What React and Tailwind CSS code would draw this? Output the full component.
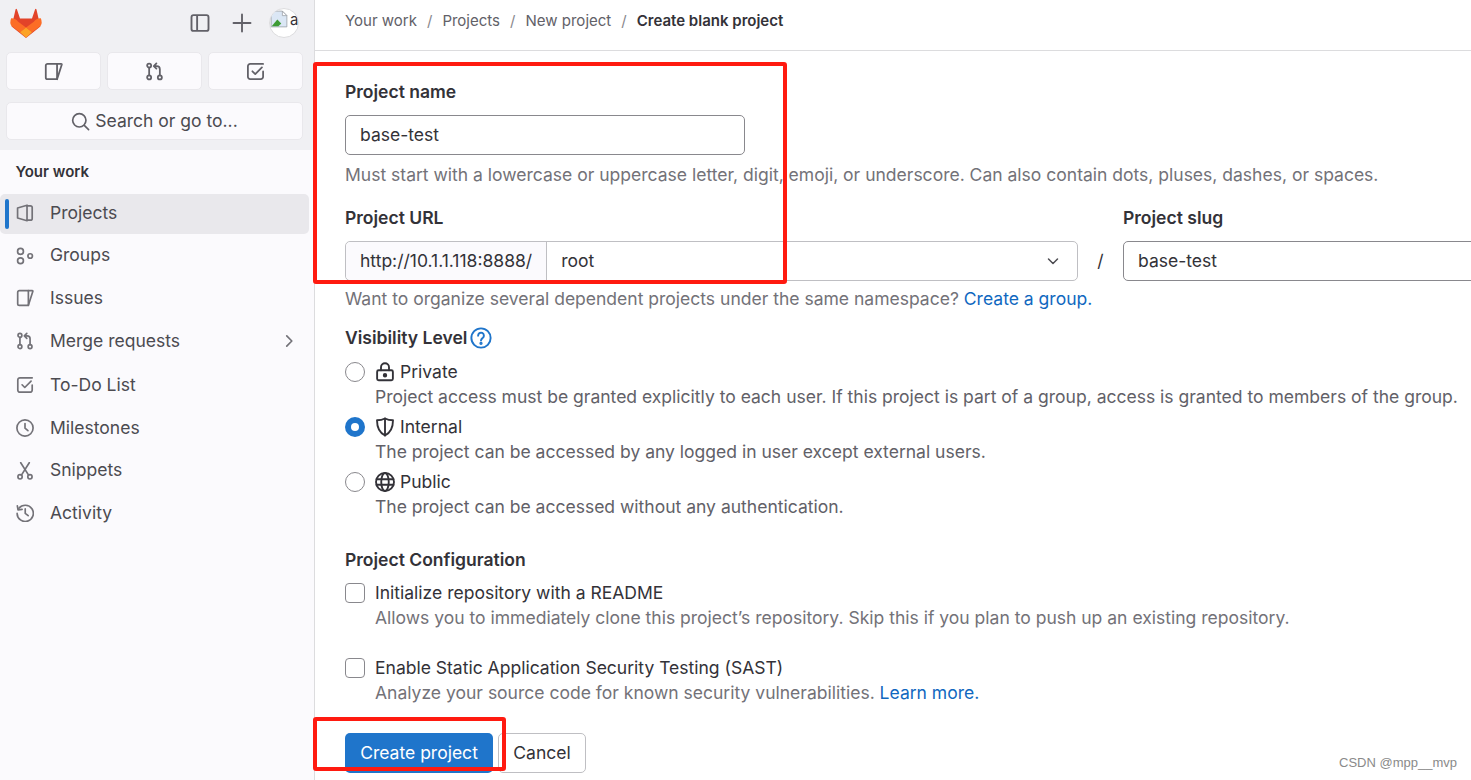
const Icon = ({ children, className = 'w-5 h-5' }) => (
  <svg viewBox="0 0 16 16" fill="none" stroke="currentColor" strokeWidth="1.5" strokeLinecap="round" strokeLinejoin="round" className={`shrink-0 ${className}`}>
    {children}
  </svg>
);

const IssuesIcon = (props) => (
  <Icon {...props}>
    <path d="M11 1.500H3a1.500 1.500 0 0 0-1.500 1.500v10A1.500 1.500 0 0 0 3 14.500h8z" />
    <path d="M11 1.500h3.500a.5.500 0 0 1 .5.600L11 14.500" />
  </Icon>
);

const MergeIcon = (props) => (
  <Icon {...props}>
    <circle cx="3.500" cy="3" r="1.700" />
    <circle cx="3.500" cy="13" r="1.700" />
    <circle cx="12.500" cy="13" r="1.700" />
    <path d="M3.500 4.700v6.600M12.500 11.300V6a2.600 2.600 0 0 0-2.600-2.600H7.600M9.600 1.200L7.400 3.400l2.200 2.200" />
  </Icon>
);

const TodoIcon = (props) => (
  <Icon {...props}>
    <path d="M14.400 8v4.500a1.900 1.900 0 0 1-1.900 1.900h-9a1.900 1.900 0 0 1-1.900-1.900v-9a1.900 1.900 0 0 1 1.900-1.900h10.900" />
    <path d="M5.400 7.800l2.400 2.400 5.600-5.600" />
  </Icon>
);

const ProjectIcon = (props) => (
  <Icon {...props}>
    <path d="M1.400 3.500L9.800 1.100v13.800l-8.400-2.400z" />
    <path d="M9.800 1.600h3a1.600 1.600 0 0 1 1.600 1.600v9.600a1.600 1.600 0 0 1-1.600 1.600h-3" />
  </Icon>
);

const GroupIcon = (props) => (
  <Icon {...props}>
    <circle cx="4" cy="3.900" r="2.600" />
    <circle cx="4" cy="12.200" r="2.600" />
    <circle cx="12.600" cy="8" r="2" />
  </Icon>
);

const ClockIcon = (props) => (
  <Icon {...props}>
    <circle cx="8" cy="8" r="7.200" />
    <path d="M8 4v4.200l2.600 2.200" />
  </Icon>
);

const SnippetIcon = (props) => (
  <Icon {...props}>
    <circle cx="3.600" cy="13.200" r="1.900" />
    <circle cx="12.400" cy="13.200" r="1.900" />
    <path d="M4.800 11.700L11.800 .6M11.200 11.700L4.200 .6" />
  </Icon>
);

const HistoryIcon = (props) => (
  <Icon {...props}>
    <path d="M2.600 3.800A7.200 7.200 0 1 1 1 8.400" />
    <path d="M1.200 1.600l.6 3.600 3.600-.4" />
    <path d="M8.200 4.400v4l2.600 2" />
  </Icon>
);

const LockIcon = () => (
  <Icon className="w-[20px] h-[20px] text-[#333238]">
    <rect x="1.700" y="6.600" width="12.600" height="8" rx="1.200" />
    <path d="M4.800 6.600V4.200a3.200 3.200 0 0 1 6.400 0v2.400" />
    <circle cx="8" cy="10.600" r="1" fill="currentColor" />
  </Icon>
);

const ShieldIcon = () => (
  <Icon className="w-[20px] h-[20px] text-[#333238]">
    <path d="M8 1.200c2 1 4 1.400 6.400 1.400 0 5.800-1.600 9.800-6.400 12.200C3.200 12.400 1.600 8.400 1.600 2.600 4 2.600 6 2.200 8 1.200z" />
    <path d="M8 1.200v13.600" />
  </Icon>
);

const GlobeIcon = () => (
  <Icon className="w-[20px] h-[20px] text-[#333238]">
    <circle cx="8" cy="8" r="7.200" />
    <ellipse cx="8" cy="8" rx="3" ry="7.200" />
    <path d="M1.200 5.800h13.600M1.200 10.200h13.600" />
  </Icon>
);

const Logo = () => (
  <svg viewBox="0 0 32 30" className="w-[32px] h-[30px]">
    <path fill="#e24329" d="M16 30L1.600 18.600 5.600 1.200a.7.700 0 0 1 1.300 0L10 10.400h12l3.100-9.200a.7.700 0 0 1 1.300 0l4 17.400z" />
    <path fill="#fc6d26" d="M1.200 10.200a9 9 0 0 0-.9 4.600c.1 1.400.7 2.800 1.900 3.700L10 24.200l6-4.600-7.800-5.900a8 8 0 0 0-7-3.500zM30.800 10.200a9 9 0 0 1 .9 4.600c-.1 1.400-.7 2.800-1.900 3.700L22 24.200l-6-4.600 7.800-5.900a8 8 0 0 1 7-3.500z" />
    <path fill="#fca326" d="M10 24.200l6-4.600 6 4.600-5.200 4.900a1.200 1.200 0 0 1-1.600 0z" />
  </svg>
);

const navItems = [
  { label: 'Projects', icon: ProjectIcon, active: true },
  { label: 'Groups', icon: GroupIcon },
  { label: 'Issues', icon: IssuesIcon },
  { label: 'Merge requests', icon: MergeIcon, chevron: true },
  { label: 'To-Do List', icon: TodoIcon, spaced: true },
  { label: 'Milestones', icon: ClockIcon },
  { label: 'Snippets', icon: SnippetIcon },
  { label: 'Activity', icon: HistoryIcon },
];

const Sidebar = () => (
  <aside className="w-[315px] shrink-0 h-full bg-[#fbfafd] border-r border-[#dcdcde] flex flex-col">
    <div className="bg-[#f0f0f3] h-[150px] pl-[6px] pr-[11px] shrink-0">
      <div className="h-[46px] flex items-center">
        <div className="ml-[4px]"><Logo /></div>
        <div className="ml-auto flex items-center text-[#626168]">
          <svg viewBox="0 0 16 16" fill="none" stroke="currentColor" strokeWidth="1.500" className="w-[20px] h-[20px]">
            <rect x="1.200" y="1.700" width="13.600" height="12.600" rx="1.600" />
            <path d="M5.700 1.700v12.600" />
          </svg>
          <svg viewBox="0 0 16 16" fill="none" stroke="currentColor" strokeWidth="1.500" strokeLinecap="round" className="w-[20px] h-[20px] ml-[22px]">
            <path d="M8 1.200v13.600M1.200 8h13.600" />
          </svg>
          <div className="w-[30px] h-[30px] ml-[17px] mr-[4px] rounded-full border border-[#dcdcde] overflow-hidden relative bg-white">
            <svg viewBox="0 0 16 16" className="w-[18px] h-[18px] absolute left-0 top-[1px]">
              <path fill="#dbe7f5" stroke="#9aa0a6" strokeWidth="0.700" d="M1 1h10l4 4v10H1z" />
              <path fill="#fff" stroke="#9aa0a6" strokeWidth="0.700" d="M11 1v4h4z" />
              <path fill="#3e9c35" d="M1.500 14.500l5-6 3.500 3.500-2.500 2.500z" />
            </svg>
            <span className="absolute left-[20px] top-[2px] text-[15px] leading-[18px] text-[#333238]">a</span>
          </div>
        </div>
      </div>
      <div className="flex gap-[6.500px] mt-[6px]">
        {[IssuesIcon, MergeIcon, TodoIcon].map((I, idx) => (
          <div key={idx} className="flex-1 h-[38px] bg-[#fbfafd] rounded-[5px] border border-[#e9e8ec] flex items-center justify-center text-[#626168]">
            <I className="w-[19px] h-[19px]" />
          </div>
        ))}
      </div>
      <div className="h-[38px] mt-[12px] bg-[#fbfafd] rounded-[5px] border border-[#e9e8ec] flex items-center justify-center gap-[5px] text-[#4c4b51] text-[17.530px]">
        <svg viewBox="0 0 16 16" fill="none" stroke="#626168" strokeWidth="1.400" strokeLinecap="round" className="w-[19px] h-[19px]">
          <circle cx="7" cy="7" r="5.600" />
          <path d="M11.200 11.200l3.600 3.600" />
        </svg>
        Search or go to...
      </div>
    </div>
    <div className="h-[24px] mt-[10px] pl-[15.500px] flex items-center text-[15px] font-semibold text-[#333238]">Your work</div>
    <nav className="mt-[10px] mr-[5px] flex flex-col gap-[2.600px]">
      {navItems.map(({ label, icon: I, active, chevron, spaced }) => (
        <div key={label} className={`relative h-[40px] pb-[2px] rounded-[5px] flex items-center pl-[16px] text-[17.530px] text-[#4c4b51] ${active ? 'bg-[#e9e8ec]' : ''} ${spaced ? 'mt-[2px]' : ''}`}>
          {active && <span className="absolute left-[5px] top-[5px] bottom-[5px] w-[4px] rounded-full bg-[#1f75cb]" />}
          <span className="text-[#737278]"><I className="w-[18px] h-[18px]" /></span>
          <span className="ml-[16px]">{label}</span>
          {chevron && (
            <svg viewBox="0 0 16 16" fill="none" stroke="#737278" strokeWidth="1.500" strokeLinecap="round" strokeLinejoin="round" className="w-[18px] h-[18px] ml-auto mr-[11px]">
              <path d="M6 3.500L10.500 8 6 12.500" />
            </svg>
          )}
        </div>
      ))}
    </nav>
  </aside>
);

const Label = ({ children, className = '' }) => (
  <div className={`h-[24px] flex items-center font-semibold text-[#333238] ${className}`}>{children}</div>
);

const Help = ({ children, className = '' }) => (
  <div className={`h-[24px] flex items-center text-[#737278] whitespace-pre ${className}`}>{children}</div>
);

const Radio = ({ checked }) =>
  checked ? (
    <span className="w-[20px] h-[20px] rounded-full bg-[#1f75cb] flex items-center justify-center shrink-0">
      <span className="w-[8px] h-[8px] rounded-full bg-white" />
    </span>
  ) : (
    <span className="w-[20px] h-[20px] rounded-full border border-[#89888d] bg-white shrink-0" />
  );

const visibility = [
  { label: 'Private', icon: LockIcon, help: 'Project access must be granted explicitly to each user. If this project is part of a group, access is granted to members of the group.', mt: 'mt-[10px]' },
  { label: 'Internal', icon: ShieldIcon, checked: true, help: 'The project can be accessed by any logged in user except external users.', mt: 'mt-[6px]' },
  { label: 'Public', icon: GlobeIcon, help: 'The project can be accessed without any authentication.', mt: 'mt-[6px]' },
];

const Form = () => (
  <div className="pl-[30px] w-[1300px]">
    <Label className="mt-[29px]">Project name</Label>
    <div className="mt-[11px] w-[400px] h-[40px] rounded-[5px] border border-[#89888d] flex items-center px-[14px] text-[#333238]">base-test</div>
    <Help className="mt-[8px]">Must start with a lowercase or uppercase letter, digit, emoji, or underscore. Can also contain dots, pluses, dashes, or spaces.</Help>
    <div className="flex items-start mt-[19px]">
      <div className="w-[733px] shrink-0">
        <Label>Project URL</Label>
        <div className="mt-[11px] h-[40px] rounded-[5px] border border-[#bfbfc3] flex items-center text-[#333238]">
          <div className="h-full flex items-center px-[14px] bg-[#fbfafd] border-r border-[#bfbfc3] rounded-l-[5px] whitespace-nowrap">http://10.1.1.118:8888/</div>
          <div className="pl-[14px]">root</div>
          <svg viewBox="0 0 16 16" fill="none" stroke="#4c4b51" strokeWidth="1.500" strokeLinecap="round" strokeLinejoin="round" className="w-[16px] h-[16px] ml-auto mr-[16px]">
            <path d="M3.500 6L8 10.500 12.500 6" />
          </svg>
        </div>
      </div>
      <div className="w-[45px] shrink-0 h-[40px] mt-[35px] flex items-center justify-center text-[#333238]">/</div>
      <div className="w-[400px] shrink-0">
        <Label>Project slug</Label>
        <div className="mt-[11px] h-[40px] rounded-[5px] border border-[#89888d] flex items-center px-[14px] text-[#333238]">base-test</div>
      </div>
    </div>
    <Help className="mt-[6px]">Want to organize several dependent projects under the same namespace? <span className="text-[#1068bf]">Create a group.</span></Help>
    <Label className="mt-[15px]">
      Visibility Level
      <svg viewBox="0 0 16 16" fill="none" stroke="#1f75cb" strokeWidth="1.400" strokeLinecap="round" className="w-[22px] h-[22px] ml-[3px]">
        <circle cx="8" cy="8" r="7" />
        <path d="M5.900 6.300a2.100 2.100 0 1 1 3.400 1.600c-.8.600-1.300 1-1.300 2" />
        <circle cx="8" cy="11.900" r=".5" fill="#1f75cb" />
      </svg>
    </Label>
    {visibility.map(({ label, icon: I, help, checked, mt }) => (
      <div key={label} className={mt}>
        <div className="h-[24px] flex items-center text-[#333238]">
          <Radio checked={checked} />
          <span className="ml-[10px] flex items-center gap-[5px]"><I />{label}</span>
        </div>
        <Help className="mt-[1px] ml-[30px] !text-[#626168]">{help}</Help>
      </div>
    ))}
    <Label className="mt-[29px]">Project Configuration</Label>
    <div className="mt-[9px] h-[24px] flex items-center text-[#333238]">
      <span className="w-[20px] h-[20px] rounded-[4px] border border-[#89888d] bg-white shrink-0" />
      <span className="ml-[10px]">Initialize repository with a README</span>
    </div>
    <Help className="mt-[1px] ml-[30px]">Allows you to immediately clone this project’s repository. Skip this if you plan to push up an existing repository.</Help>
    <div className="mt-[26px] h-[24px] flex items-center text-[#333238]">
      <span className="w-[20px] h-[20px] rounded-[4px] border border-[#89888d] bg-white shrink-0" />
      <span className="ml-[10px]">Enable Static Application Security Testing (SAST)</span>
    </div>
    <Help className="mt-[1px] ml-[30px]">Analyze your source code for known security vulnerabilities. <span className="text-[#1068bf]">Learn more.</span></Help>
    <div className="mt-[28px] flex gap-[5px]">
      <button className="h-[40px] w-[148px] rounded-[5px] bg-[#1f75cb] text-white">Create project</button>
      <button className="h-[40px] w-[88px] rounded-[5px] border border-[#bfbfc3] bg-white text-[#333238]">Cancel</button>
    </div>
  </div>
);

export default function App() {
  return (
    <div className="relative w-[1471px] h-[780px] overflow-hidden bg-white flex text-[17.530px] font-['Inter',sans-serif]">
      <Sidebar />
      <main className="flex-1 min-w-0">
        <div className="h-[51px] border-b border-[#dcdcde] pl-[30px] pb-[7px] flex items-center text-[15.030px] text-[#626168]">
          <span>Your work</span>
          <span className="mx-[10px] text-[#89888d]">/</span>
          <span>Projects</span>
          <span className="mx-[10px] text-[#89888d]">/</span>
          <span>New project</span>
          <span className="mx-[10px] text-[#89888d]">/</span>
          <span className="font-semibold text-[#333238]">Create blank project</span>
        </div>
        <Form />
      </main>

      {/* red annotation boxes drawn over the screenshot */}
      <div className="absolute left-[313px] top-[62px] w-[474px] h-[222px] border-[4px] border-[#ff1a10] rounded-[3px]" />
      <div className="absolute left-[313px] top-[717px] w-[193px] h-[54px] border-[4px] border-[#ff1a10] rounded-[3px]" />
      <div className="absolute left-[1339px] top-[755px] text-[13px] leading-[16px] text-[#8a8a8a] font-['Liberation_Sans',sans-serif]">CSDN @mpp__mvp</div>
    </div>
  );
}
